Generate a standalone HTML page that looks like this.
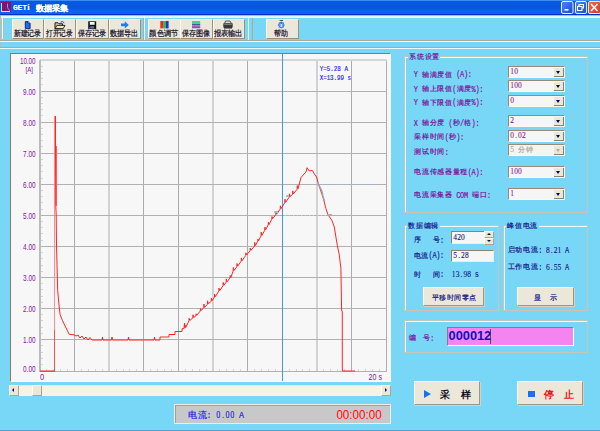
<!DOCTYPE html>
<html><head><meta charset="utf-8">
<style>
*{margin:0;padding:0;box-sizing:border-box}
html,body{width:600px;height:431px;overflow:hidden;background:#78d7f6;font-family:"Liberation Sans",sans-serif}
.a{position:absolute}
#title{left:0;top:0;width:600px;height:15px;background:linear-gradient(#3d8ef0 0,#3d8ef0 1px,#0858e0 1px,#0a56e0 9px,#0c62ee 10px,#0c62ee 14px,#0030c8 14px,#0030c8 15px)}
.ttxt{color:#fff;font-weight:bold;font-size:9px;top:2px;white-space:nowrap}
.tb{top:19px;height:20px;background:#ebe8da;border-right:1px solid #9c9078;border-bottom:1px solid #9c9078;border-top:1px solid #fafaf2;border-left:1px solid #fafaf2}
.lbl{color:#800080;font-size:8px;line-height:9px;white-space:nowrap}
.navy{color:#000080;font-size:8px;line-height:9px;white-space:nowrap}
.combo{left:508px;width:57px;height:12px;background:#f8f8f4;border-top:1px solid #9a8a74;border-left:1px solid #9a8a74;border-bottom:1px solid #fafaf4;border-right:1px solid #fafaf4}
.combo .v{position:absolute;left:2px;top:1px;font-size:8px;line-height:9px;color:#800080;font-family:"Liberation Mono",monospace}
.combo .dd{position:absolute;right:0;top:1px;width:10px;height:9px;background:#ebe8d8;border-right:1px solid #8c8070;border-bottom:1px solid #8c8070}
.combo .dd:after{content:"";position:absolute;left:2px;top:3px;border-left:2.5px solid transparent;border-right:2.5px solid transparent;border-top:3px solid #000070}
.combo.dis .dd:after{border-top-color:#b0aca0}
.grp{border:1px solid #c8c4b8;box-shadow:inset 1px 1px 0 #f0f8f8}
.gt{background:#78d7f6;font-size:8px;line-height:9px;white-space:nowrap;padding:0 1px}
.sbtn{background:#ebe8da;border-top:1px solid #fffff8;border-left:1px solid #fffff8;border-right:1px solid #a8a498;border-bottom:1px solid #a8a498}
.btn{background:#ebe8da;border-top:1px solid #fffff8;border-left:1px solid #fffff8;border-right:1px solid #9c9888;border-bottom:1px solid #9c9888;box-shadow:1px 1px 0 #d8d0c0}
</style></head><body>
<!-- title bar -->
<div class="a" id="title"></div>
<div class="a" style="left:1px;top:2px;width:10px;height:10px;background:#8a1070"></div>
<div class="a" style="left:1px;top:3px;width:1px;height:8px;background:#a0f0ff"></div>
<div class="a" style="left:1px;top:11px;width:9px;height:1px;background:#a0f0ff"></div>
<svg class="a" style="left:0;top:0" width="90" height="15"><text x="13 17.6 22.2" y="10.3" font-family="Liberation Mono" font-weight="bold" font-size="8" fill="#fff" stroke="#fff" stroke-width="0.15">GET</text><text x="27.2" y="10.3" font-family="Liberation Serif" font-weight="bold" font-size="8.5" fill="#fff" stroke="#fff" stroke-width="0.15">i</text><text x="35.8" y="11.3" font-family="Liberation Sans" font-weight="bold" font-size="8.4" fill="#fff" stroke="#fff" stroke-width="0.15" textLength="32.5" lengthAdjust="spacingAndGlyphs">数据采集</text><path d="M7.5,3.5 v4 q0.5,2 2.5,3" fill="none" stroke="#60a8f8" stroke-width="1"/></svg>
<!-- title buttons -->
<svg class="a" style="left:556px;top:0" width="44" height="15">
<defs><linearGradient id="gb" x1="0" y1="0" x2="1" y2="1"><stop offset="0" stop-color="#4a88fa"/><stop offset="1" stop-color="#1848d0"/></linearGradient>
<linearGradient id="gr" x1="0" y1="0" x2="1" y2="1"><stop offset="0" stop-color="#f06a50"/><stop offset="1" stop-color="#d03a20"/></linearGradient></defs>
<rect x="5.5" y="1.5" width="11.5" height="12" rx="1.5" fill="url(#gb)" stroke="#e8f0ff" stroke-width="1"/>
<rect x="8.5" y="9" width="4" height="1.6" fill="#fff"/>
<rect x="19.5" y="1.5" width="11" height="12" rx="1.5" fill="url(#gb)" stroke="#e8f0ff" stroke-width="1"/>
<rect x="23" y="4.5" width="4.5" height="3.5" fill="none" stroke="#fff" stroke-width="1"/>
<rect x="21.5" y="6.5" width="4.5" height="4" fill="#2a60e0" stroke="#fff" stroke-width="1.1"/>
<rect x="32.5" y="1.5" width="12" height="12" rx="1.5" fill="url(#gr)" stroke="#f8e8e0" stroke-width="1"/>
<path d="M35,4 L41.5,11 M41.5,4 L35,11" stroke="#fff" stroke-width="1.5"/>
</svg>
<!-- toolbar -->
<div class="a" style="left:0;top:15px;width:600px;height:1px;background:#c0b8a8"></div>
<div class="a" style="left:0;top:16px;width:600px;height:2px;background:#e0f8ff"></div>
<div class="a" style="left:0;top:15px;width:1px;height:33px;background:#c8b8a0"></div>
<div class="a" style="left:2px;top:18px;width:1px;height:21px;background:#f0f8f8"></div>
<div class="a" style="left:3px;top:18px;width:1px;height:21px;background:#c0b8a8"></div>
<div class="a" style="left:0;top:40px;width:600px;height:1px;background:#b0a890"></div>
<div class="a" style="left:0;top:41px;width:600px;height:1px;background:#e8f8fc"></div>
<div class="a" style="left:0;top:47px;width:600px;height:1px;background:#b0a890"></div>
<div class="a" style="left:0;top:48px;width:600px;height:1px;background:#e8f8fc"></div>

<div class="a tb" style="left:12px;width:32px"></div>
<div class="a tb" style="left:44px;width:32px"></div>
<div class="a tb" style="left:76px;width:33px"></div>
<div class="a tb" style="left:109px;width:32px"></div>
<div class="a tb" style="left:148px;width:33px"></div>
<div class="a tb" style="left:180px;width:33px"></div>
<div class="a tb" style="left:213px;width:32px"></div>
<div class="a tb" style="left:266px;width:33px"></div>
<div class="a" style="left:143px;top:18px;width:1px;height:22px;background:#c0a890"></div>
<div class="a" style="left:144px;top:18px;width:1px;height:22px;background:#f0f4f0"></div>
<div class="a" style="left:248px;top:18px;width:1px;height:22px;background:#f0f8f8"></div>
<div class="a" style="left:252px;top:18px;width:1px;height:22px;background:#b0a890"></div>
<svg class="a" style="left:0;top:0" width="300" height="42"><text x="13.6" y="36" font-family="Liberation Sans" font-size="8" fill="#141428" stroke="#141428" stroke-width="0.22" textLength="27.7" lengthAdjust="spacingAndGlyphs">新建记录</text><text x="46.1" y="36" font-family="Liberation Sans" font-size="8" fill="#141428" stroke="#141428" stroke-width="0.22" textLength="26.7" lengthAdjust="spacingAndGlyphs">打开记录</text><text x="78" y="36" font-family="Liberation Sans" font-size="8" fill="#141428" stroke="#141428" stroke-width="0.22" textLength="28.4" lengthAdjust="spacingAndGlyphs">保存记录</text><text x="110" y="36" font-family="Liberation Sans" font-size="8" fill="#141428" stroke="#141428" stroke-width="0.22" textLength="28.4" lengthAdjust="spacingAndGlyphs">数据导出</text><text x="149.3" y="36" font-family="Liberation Sans" font-size="8" fill="#141428" stroke="#141428" stroke-width="0.22" textLength="29.2" lengthAdjust="spacingAndGlyphs">颜色调节</text><text x="181.8" y="36" font-family="Liberation Sans" font-size="8" fill="#141428" stroke="#141428" stroke-width="0.22" textLength="28.2" lengthAdjust="spacingAndGlyphs">保存图像</text><text x="213.5" y="36" font-family="Liberation Sans" font-size="8" fill="#141428" stroke="#141428" stroke-width="0.22" textLength="29.2" lengthAdjust="spacingAndGlyphs">报表输出</text><text x="274.3" y="36.2" font-family="Liberation Sans" font-size="8.2" fill="#141428" stroke="#141428" stroke-width="0.22" textLength="14" lengthAdjust="spacingAndGlyphs">帮助</text><path d="M25.3,21.6 h2.8 l2,2 v5 h-4.8 z" fill="#1a6ef4" stroke="#0c1c70" stroke-width="0.9"/><path d="M28.1,21.6 v2 h2" fill="#c8d8ff" stroke="#0c1c70" stroke-width="0.7"/><path d="M55,22.8 h3 l1,1 h3.6 v5 h-7.6 z" fill="#d8d0a0" stroke="#181818" stroke-width="1"/><path d="M55.2,28.6 l1.6,-3.2 h8.2 l-1.8,3.2 z" fill="#f0e8c0" stroke="#181818" stroke-width="0.9"/><path d="M60.5,22.2 q2,-1.6 3.8,0.6" fill="none" stroke="#2040e0" stroke-width="1"/><rect x="88.2" y="21.3" width="8" height="7.8" fill="#0c1424"/><rect x="89.8" y="22" width="4.8" height="2.8" fill="#f4f4f4"/><rect x="90.2" y="26.3" width="4" height="2.2" fill="#6a7088"/><rect x="88.8" y="27" width="1.2" height="1.6" fill="#2a40ff"/><path d="M121,23.6 h3.8 v-2.4 l4,3.7 l-4,3.7 v-2.4 h-3.8 z" fill="#1a7ef0"/><rect x="160.3" y="21" width="2.8" height="7.4" fill="#ff2020"/><rect x="163.1" y="21" width="2.8" height="7.4" fill="#20c040"/><rect x="165.9" y="21" width="2.7" height="7.4" fill="#2030e0"/><rect x="192" y="21" width="8.2" height="3.2" fill="#38d898"/><rect x="192" y="24.2" width="8.2" height="1" fill="#204080"/><rect x="192" y="25.2" width="8.2" height="1" fill="#30b0a0"/><rect x="192" y="26.2" width="8.2" height="1" fill="#a040c0"/><rect x="192" y="27.2" width="8.2" height="1" fill="#3050d0"/><path d="M225.5,21 h4.5 l1.2,2.4 h-6.5 z" fill="#e8e8e8" stroke="#303030" stroke-width="0.8"/><path d="M223.3,24 q0,-1 1,-1 h7.4 q1,0 1,1 v3.6 h-9.4 z" fill="#383838"/><rect x="224.2" y="23.6" width="7.6" height="1.2" fill="#909090"/><rect x="224" y="27.2" width="8" height="1.3" fill="#202020"/><polygon points="284.90,25.00 283.98,26.11 283.85,27.55 282.41,27.68 281.30,28.60 280.19,27.68 278.75,27.55 278.62,26.11 277.70,25.00 278.62,23.89 278.75,22.45 280.19,22.32 281.30,21.40 282.41,22.32 283.85,22.45 283.98,23.89" fill="#3a78f0"/><circle cx="281.3" cy="25.0" r="2.2" fill="#6aa0ff"/><rect x="280.8" y="24" width="1" height="3" fill="#f0f8ff"/><rect x="280.8" y="22.6" width="1" height="0.9" fill="#0a30c0"/><rect x="279.6" y="20" width="3.4" height="1" fill="#505050"/></svg>
<div class="a" style="left:10px;top:53px;width:381px;height:329px;background:#f7f7f7;border-top:1px solid #8a7a6a;border-left:1px solid #8a7a6a;border-right:1px solid #fafafa;border-bottom:1px solid #fafafa"></div><svg class="a" style="left:0;top:0" width="600" height="431" id="chart" font-family="Liberation Sans"><rect x="74" y="60" width="1" height="311" fill="#acacac"/><rect x="108" y="60" width="2" height="311" fill="#d2d2d2"/><rect x="143" y="60" width="1" height="311" fill="#acacac"/><rect x="178" y="60" width="1" height="311" fill="#acacac"/><rect x="212" y="60" width="2" height="311" fill="#d2d2d2"/><rect x="247" y="60" width="1" height="311" fill="#acacac"/><rect x="282" y="60" width="1" height="311" fill="#acacac"/><rect x="316" y="60" width="2" height="311" fill="#d2d2d2"/><rect x="351" y="60" width="1" height="311" fill="#acacac"/><rect x="386" y="60" width="1" height="311" fill="#acacac"/><rect x="40" y="59" width="347" height="2" fill="#d6d6d6"/><rect x="40" y="91" width="347" height="1" fill="#b0b0b0"/><rect x="40" y="122" width="347" height="1" fill="#b0b0b0"/><rect x="40" y="153" width="347" height="1" fill="#b0b0b0"/><rect x="40" y="184" width="347" height="1" fill="#b0b0b0"/><rect x="40" y="215" width="347" height="1" fill="#b0b0b0"/><rect x="40" y="246" width="347" height="1" fill="#b0b0b0"/><rect x="40" y="277" width="347" height="1" fill="#b0b0b0"/><rect x="40" y="308" width="347" height="1" fill="#b0b0b0"/><rect x="40" y="339" width="347" height="1" fill="#b0b0b0"/><rect x="39" y="60" width="2" height="312" fill="#bcbcbc"/><rect x="40" y="371" width="347" height="1" fill="#b0b0b0"/><rect x="41" y="66" width="2" height="1" fill="#d4d4d4"/><rect x="41" y="72" width="2" height="1" fill="#d4d4d4"/><rect x="41" y="78" width="2" height="1" fill="#d4d4d4"/><rect x="41" y="84" width="2" height="1" fill="#d4d4d4"/><rect x="41" y="97" width="2" height="1" fill="#d4d4d4"/><rect x="41" y="103" width="2" height="1" fill="#d4d4d4"/><rect x="41" y="109" width="2" height="1" fill="#d4d4d4"/><rect x="41" y="115" width="2" height="1" fill="#d4d4d4"/><rect x="41" y="128" width="2" height="1" fill="#d4d4d4"/><rect x="41" y="134" width="2" height="1" fill="#d4d4d4"/><rect x="41" y="140" width="2" height="1" fill="#d4d4d4"/><rect x="41" y="146" width="2" height="1" fill="#d4d4d4"/><rect x="41" y="159" width="2" height="1" fill="#d4d4d4"/><rect x="41" y="165" width="2" height="1" fill="#d4d4d4"/><rect x="41" y="171" width="2" height="1" fill="#d4d4d4"/><rect x="41" y="178" width="2" height="1" fill="#d4d4d4"/><rect x="41" y="190" width="2" height="1" fill="#d4d4d4"/><rect x="41" y="196" width="2" height="1" fill="#d4d4d4"/><rect x="41" y="202" width="2" height="1" fill="#d4d4d4"/><rect x="41" y="209" width="2" height="1" fill="#d4d4d4"/><rect x="41" y="221" width="2" height="1" fill="#d4d4d4"/><rect x="41" y="227" width="2" height="1" fill="#d4d4d4"/><rect x="41" y="233" width="2" height="1" fill="#d4d4d4"/><rect x="41" y="240" width="2" height="1" fill="#d4d4d4"/><rect x="41" y="252" width="2" height="1" fill="#d4d4d4"/><rect x="41" y="258" width="2" height="1" fill="#d4d4d4"/><rect x="41" y="265" width="2" height="1" fill="#d4d4d4"/><rect x="41" y="271" width="2" height="1" fill="#d4d4d4"/><rect x="41" y="283" width="2" height="1" fill="#d4d4d4"/><rect x="41" y="289" width="2" height="1" fill="#d4d4d4"/><rect x="41" y="296" width="2" height="1" fill="#d4d4d4"/><rect x="41" y="302" width="2" height="1" fill="#d4d4d4"/><rect x="41" y="314" width="2" height="1" fill="#d4d4d4"/><rect x="41" y="320" width="2" height="1" fill="#d4d4d4"/><rect x="41" y="327" width="2" height="1" fill="#d4d4d4"/><rect x="41" y="333" width="2" height="1" fill="#d4d4d4"/><rect x="41" y="345" width="2" height="1" fill="#d4d4d4"/><rect x="41" y="352" width="2" height="1" fill="#d4d4d4"/><rect x="41" y="358" width="2" height="1" fill="#d4d4d4"/><rect x="41" y="364" width="2" height="1" fill="#d4d4d4"/><rect x="46" y="369" width="1" height="2" fill="#d4d4d4"/><rect x="53" y="369" width="1" height="2" fill="#d4d4d4"/><rect x="60" y="369" width="1" height="2" fill="#d4d4d4"/><rect x="67" y="369" width="1" height="2" fill="#d4d4d4"/><rect x="81" y="369" width="1" height="2" fill="#d4d4d4"/><rect x="88" y="369" width="1" height="2" fill="#d4d4d4"/><rect x="95" y="369" width="1" height="2" fill="#d4d4d4"/><rect x="102" y="369" width="1" height="2" fill="#d4d4d4"/><rect x="116" y="369" width="1" height="2" fill="#d4d4d4"/><rect x="123" y="369" width="1" height="2" fill="#d4d4d4"/><rect x="129" y="369" width="1" height="2" fill="#d4d4d4"/><rect x="136" y="369" width="1" height="2" fill="#d4d4d4"/><rect x="150" y="369" width="1" height="2" fill="#d4d4d4"/><rect x="157" y="369" width="1" height="2" fill="#d4d4d4"/><rect x="164" y="369" width="1" height="2" fill="#d4d4d4"/><rect x="171" y="369" width="1" height="2" fill="#d4d4d4"/><rect x="185" y="369" width="1" height="2" fill="#d4d4d4"/><rect x="192" y="369" width="1" height="2" fill="#d4d4d4"/><rect x="199" y="369" width="1" height="2" fill="#d4d4d4"/><rect x="206" y="369" width="1" height="2" fill="#d4d4d4"/><rect x="219" y="369" width="1" height="2" fill="#d4d4d4"/><rect x="226" y="369" width="1" height="2" fill="#d4d4d4"/><rect x="233" y="369" width="1" height="2" fill="#d4d4d4"/><rect x="240" y="369" width="1" height="2" fill="#d4d4d4"/><rect x="254" y="369" width="1" height="2" fill="#d4d4d4"/><rect x="261" y="369" width="1" height="2" fill="#d4d4d4"/><rect x="268" y="369" width="1" height="2" fill="#d4d4d4"/><rect x="275" y="369" width="1" height="2" fill="#d4d4d4"/><rect x="289" y="369" width="1" height="2" fill="#d4d4d4"/><rect x="296" y="369" width="1" height="2" fill="#d4d4d4"/><rect x="302" y="369" width="1" height="2" fill="#d4d4d4"/><rect x="309" y="369" width="1" height="2" fill="#d4d4d4"/><rect x="323" y="369" width="1" height="2" fill="#d4d4d4"/><rect x="330" y="369" width="1" height="2" fill="#d4d4d4"/><rect x="337" y="369" width="1" height="2" fill="#d4d4d4"/><rect x="344" y="369" width="1" height="2" fill="#d4d4d4"/><rect x="358" y="369" width="1" height="2" fill="#d4d4d4"/><rect x="365" y="369" width="1" height="2" fill="#d4d4d4"/><rect x="372" y="369" width="1" height="2" fill="#d4d4d4"/><rect x="379" y="369" width="1" height="2" fill="#d4d4d4"/><text x="35.6" y="63.8" text-anchor="end" textLength="15.7" lengthAdjust="spacingAndGlyphs" font-size="8.4" fill="#8414a0">10.00</text><text x="35.6" y="94.5" text-anchor="end" textLength="12.5" lengthAdjust="spacingAndGlyphs" font-size="8.4" fill="#8414a0">9.00</text><text x="35.6" y="125.5" text-anchor="end" textLength="12.5" lengthAdjust="spacingAndGlyphs" font-size="8.4" fill="#8414a0">8.00</text><text x="35.6" y="156.5" text-anchor="end" textLength="12.5" lengthAdjust="spacingAndGlyphs" font-size="8.4" fill="#8414a0">7.00</text><text x="35.6" y="187.5" text-anchor="end" textLength="12.5" lengthAdjust="spacingAndGlyphs" font-size="8.4" fill="#8414a0">6.00</text><text x="35.6" y="218.5" text-anchor="end" textLength="12.5" lengthAdjust="spacingAndGlyphs" font-size="8.4" fill="#8414a0">5.00</text><text x="35.6" y="249.5" text-anchor="end" textLength="12.5" lengthAdjust="spacingAndGlyphs" font-size="8.4" fill="#8414a0">4.00</text><text x="35.6" y="280.5" text-anchor="end" textLength="12.5" lengthAdjust="spacingAndGlyphs" font-size="8.4" fill="#8414a0">3.00</text><text x="35.6" y="311.5" text-anchor="end" textLength="12.5" lengthAdjust="spacingAndGlyphs" font-size="8.4" fill="#8414a0">2.00</text><text x="35.6" y="342.5" text-anchor="end" textLength="12.5" lengthAdjust="spacingAndGlyphs" font-size="8.4" fill="#8414a0">1.00</text><text x="35.6" y="372.0" text-anchor="end" textLength="12.5" lengthAdjust="spacingAndGlyphs" font-size="8.4" fill="#8414a0">0.00</text><text x="33" y="72.3" text-anchor="end" textLength="7.5" lengthAdjust="spacingAndGlyphs" font-size="8" fill="#8414a0">[A]</text><text x="40" y="380.2" textLength="4.2" lengthAdjust="spacingAndGlyphs" font-size="8.8" fill="#8414a0">0</text><text x="368.6" y="380.2" textLength="13.4" lengthAdjust="spacingAndGlyphs" font-size="8.8" fill="#8414a0">20 s</text><rect x="282" y="54" width="1" height="327" fill="#3898f4"/><text x="319.7" y="70.8" textLength="28.3" lengthAdjust="spacingAndGlyphs" font-family="Liberation Mono" font-size="7" fill="#2020e8" stroke="#2020e8" stroke-width="0.15">Y=5.28 A</text><text x="319.7" y="80.4" textLength="31.3" lengthAdjust="spacingAndGlyphs" font-family="Liberation Mono" font-size="7" fill="#2020e8" stroke="#2020e8" stroke-width="0.15">X=13.99 s</text><rect x="40" y="370.5" width="15" height="1.2" fill="#ff2020"/><rect x="54" y="116" width="1" height="255" fill="#ff8c8c"/><rect x="54" y="330" width="1" height="41" fill="#ff5050"/><rect x="56" y="146" width="1" height="60" fill="#ff6060"/><polyline points="55.5,116.0 55.5,146.0 55.7,204.0 56.2,215.0 56.5,245.0 57.7,290.5 59.0,305.0 60.1,314.7 62.5,320.7 65.5,326.8 69.2,334.3 74.0,334.8 76.0,336.0 78.0,335.0 80.0,338.0 82.0,336.0 84.0,339.0 86.0,337.0 88.0,340.0 90.0,337.5 92.0,340.0 94.0,340.0 102.0,340.0 102.5,337.0 103.0,340.0 111.5,340.0 112.0,337.0 112.5,340.0 128.0,340.0 128.5,337.0 129.0,340.0 154.0,340.0 154.5,337.0 155.0,340.0 160.0,340.0 160.0,337.0 169.0,337.0 169.0,334.5 175.0,334.5 175.0,331.5 182.0,331.5 182.0,328.7 184.0,328.7 184.5,323.0 185.0,327.8 185.2,325.4 185.9,327.3 188.9,320.9 189.1,318.3 189.8,320.4 192.8,318.0 193.0,314.8 193.7,317.5 195.9,315.8 196.1,313.8 196.8,315.3 200.3,311.0 200.5,308.5 201.2,310.5 203.7,307.8 203.9,304.0 204.6,307.3 207.4,304.3 207.6,300.8 208.3,303.8 211.2,301.3 211.4,298.2 212.1,300.8 214.4,297.2 214.6,294.1 215.3,296.7 218.8,291.1 219.0,288.1 219.7,290.6 223.0,285.7 223.2,282.4 223.9,285.2 226.1,282.3 226.3,278.9 227.0,281.8 230.0,278.0 230.2,275.5 230.9,277.5 233.1,271.1 233.3,267.5 234.0,270.6 236.8,266.7 237.0,263.5 237.7,266.2 241.2,261.2 241.4,257.9 242.1,260.7 245.7,255.5 245.9,252.8 246.6,255.0 250.0,250.8 250.2,248.0 250.9,250.3 254.5,246.0 254.7,242.4 255.4,245.5 257.7,241.3 257.9,239.1 258.6,240.8 261.0,235.9 261.2,232.1 261.9,235.4 264.7,230.4 264.9,227.2 265.6,229.9 268.2,225.0 268.4,222.1 269.1,224.5 271.8,219.2 272.0,216.5 272.7,218.7 275.7,214.7 275.9,211.6 276.6,214.2 280.2,209.1 280.4,205.8 281.1,208.6 284.7,202.8 284.9,199.2 285.6,202.3 289.3,197.0 289.5,193.8 290.2,196.5 292.5,194.4 292.7,190.9 293.4,193.9 297.1,189.3 297.3,185.6 298.0,188.8 301.0,177.6 304.0,174.0 306.0,172.0 307.1,167.7 309.2,170.9 312.4,170.5 314.4,174.0 316.5,177.0 318.6,184.4 321.8,193.8 323.8,200.0 325.9,208.5 328.0,214.7 332.2,221.0 334.3,227.0 336.4,240.0 337.4,245.7 339.2,254.4 340.9,268.3 341.6,310.0 342.3,312.0 342.3,371.0 355.0,371.0" fill="none" stroke="#ff2424" stroke-width="1" stroke-linejoin="miter"/><line x1="320" y1="184.5" x2="376" y2="184.5" stroke="#a8b4c4" stroke-width="1" stroke-dasharray="8 2 2 3"/><polyline points="317.5,182 320,187 322,191 323,196 324.5,201" fill="none" stroke="#98a8c0" stroke-width="1.3"/><line x1="285" y1="215.5" x2="332" y2="215.5" stroke="#c8ccd4" stroke-width="1" stroke-dasharray="1 3"/><rect x="327" y="214" width="5" height="2" fill="#a0acc0"/><rect x="274" y="211" width="4" height="2" fill="#a8b4c8"/><rect x="286" y="195" width="3" height="2" fill="#b0bcd0"/></svg><!-- scrollbar -->
<div class="a" style="left:9px;top:385px;width:382px;height:11px;background:#f4f3e6;border-top:1px solid #e8e4d8"></div>
<div class="a sbtn" style="left:9px;top:385px;width:10px;height:11px"></div>
<div class="a" style="left:12px;top:388px;border-top:2px solid transparent;border-bottom:2px solid transparent;border-right:2px solid #000060"></div>
<div class="a sbtn" style="left:32px;top:385px;width:10px;height:11px"></div>
<div class="a sbtn" style="left:381px;top:385px;width:10px;height:11px"></div>
<div class="a" style="left:385px;top:388px;border-top:2px solid transparent;border-bottom:2px solid transparent;border-left:2px solid #000060"></div>
<div class="a grp" style="left:404px;top:56px;width:184px;height:157px"></div>
<div class="a grp" style="left:404px;top:225px;width:95px;height:86px"></div>
<div class="a grp" style="left:503px;top:225px;width:85px;height:86px"></div>
<div class="a grp" style="left:404px;top:320px;width:184px;height:33px"></div>
<div class="a" style="left:408px;top:53px;width:32px;height:8px;background:#78d7f6"></div>
<div class="a" style="left:407px;top:222px;width:33px;height:8px;background:#78d7f6"></div>
<div class="a" style="left:506px;top:222px;width:33px;height:8px;background:#78d7f6"></div>
<div class="a combo" style="top:66px;background:#f6f6f6"><div class="dd"></div></div>
<div class="a combo" style="top:80px;background:#f6f6f6"><div class="dd"></div></div>
<div class="a combo" style="top:95px;background:#f6f6f6"><div class="dd"></div></div>
<div class="a combo" style="top:115px;background:#f6f6f6"><div class="dd"></div></div>
<div class="a combo" style="top:130px;background:#f6f6f6"><div class="dd"></div></div>
<div class="a combo dis" style="top:144px;background:#f4f4f0"><div class="dd"></div></div>
<div class="a combo" style="top:166px;background:#f6f6f6"><div class="dd"></div></div>
<div class="a combo" style="top:188px;background:#f6f6f6"><div class="dd"></div></div>
<div class="a" style="left:451px;top:231px;width:33px;height:13px;background:#f6f6f4;border-top:1px solid #8c8070;border-left:1px solid #8c8070;border-bottom:1px solid #f0ece0"></div>
<div class="a sbtn" style="left:484px;top:231px;width:10px;height:7px"></div>
<div class="a sbtn" style="left:484px;top:238px;width:10px;height:7px"></div>
<div class="a" style="left:487px;top:233px;border-left:2px solid transparent;border-right:2px solid transparent;border-bottom:2px solid #101040"></div>
<div class="a" style="left:487px;top:240px;border-left:2px solid transparent;border-right:2px solid transparent;border-top:2px solid #101040"></div>
<div class="a" style="left:451px;top:250px;width:43px;height:12px;background:#f6f6f4;border-top:1px solid #8c8070;border-left:1px solid #8c8070;border-bottom:1px solid #f0ece0;border-right:1px solid #f0ece0"></div>
<div class="a btn" style="left:423px;top:287px;width:61px;height:19px"></div>
<div class="a btn" style="left:517px;top:287px;width:57px;height:19px"></div>
<div class="a" style="left:447px;top:327px;width:127px;height:19px;background:#f484f0;border-top:1px solid #808080;border-left:1px solid #808080;border-bottom:1px solid #fff;border-right:1px solid #fff"></div>
<div class="a" style="left:490px;top:329px;width:1px;height:15px;background:#505050"></div>
<div class="a btn" style="left:414px;top:381px;width:66px;height:24px"></div>
<div class="a" style="left:424px;top:390px;border-top:4px solid transparent;border-bottom:4px solid transparent;border-left:7px solid #1a70f0"></div>
<div class="a btn" style="left:517px;top:381px;width:66px;height:24px"></div>
<div class="a" style="left:528px;top:391px;width:7px;height:6px;background:#1a70f0"></div>
<div class="a" style="left:174px;top:404px;width:217px;height:20px;background:#c8c8c8;border:1px solid #f0ece0;box-shadow:inset 1px 1px 0 #a0a0a0"></div>
<div class="a" style="left:0;top:430px;width:600px;height:1px;background:#5a9ad8"></div><svg class="a" style="left:0;top:0" width="600" height="431" font-family="Liberation Sans"><text x="409.27 416.97 424.67 432.37" y="59.40" font-size="7.1610000000000005" fill="#7e0a98" stroke="#7e0a98" stroke-width="0.18">系统设置</text><text x="408.27 415.97 423.67 431.37" y="228.40" font-size="7.1610000000000005" fill="#14148a" stroke="#14148a" stroke-width="0.18">数据编辑</text><text x="507.27 514.97 522.67 530.37" y="228.40" font-size="7.1610000000000005" fill="#14148a" stroke="#14148a" stroke-width="0.18">峰值电流</text><text transform="translate(415.93,77.3) scale(0.787,1)" text-anchor="middle" font-family="Liberation Mono" font-size="8.8" fill="#7e0a98" stroke="#7e0a98" stroke-width="0.18">Y</text><text x="421.97 429.67 437.37 445.07" y="76.70" font-size="7.1610000000000005" fill="#7e0a98" stroke="#7e0a98" stroke-width="0.18">轴满度值</text><text transform="translate(458.28,77.3) scale(0.787,1)" text-anchor="middle" font-family="Liberation Mono" font-size="8.8" fill="#7e0a98" stroke="#7e0a98" stroke-width="0.18">(</text><text transform="translate(462.12,77.3) scale(0.787,1)" text-anchor="middle" font-family="Liberation Mono" font-size="8.8" fill="#7e0a98" stroke="#7e0a98" stroke-width="0.18">A</text><text transform="translate(465.98,77.3) scale(0.787,1)" text-anchor="middle" font-family="Liberation Mono" font-size="8.8" fill="#7e0a98" stroke="#7e0a98" stroke-width="0.18">)</text><text transform="translate(469.82,77.3) scale(0.787,1)" text-anchor="middle" font-family="Liberation Mono" font-size="8.8" fill="#7e0a98" stroke="#7e0a98" stroke-width="0.18">:</text><text transform="translate(415.93,91.6) scale(0.787,1)" text-anchor="middle" font-family="Liberation Mono" font-size="8.8" fill="#7e0a98" stroke="#7e0a98" stroke-width="0.18">Y</text><text x="421.97 429.67 437.37 445.07" y="91.00" font-size="7.1610000000000005" fill="#7e0a98" stroke="#7e0a98" stroke-width="0.18">轴上限值</text><text transform="translate(454.43,91.6) scale(0.787,1)" text-anchor="middle" font-family="Liberation Mono" font-size="8.8" fill="#7e0a98" stroke="#7e0a98" stroke-width="0.18">(</text><text x="456.62 464.32" y="91.00" font-size="7.1610000000000005" fill="#7e0a98" stroke="#7e0a98" stroke-width="0.18">满度</text><text transform="translate(473.68,91.6) scale(0.787,1)" text-anchor="middle" font-family="Liberation Mono" font-size="8.8" fill="#7e0a98" stroke="#7e0a98" stroke-width="0.18">%</text><text transform="translate(477.53,91.6) scale(0.787,1)" text-anchor="middle" font-family="Liberation Mono" font-size="8.8" fill="#7e0a98" stroke="#7e0a98" stroke-width="0.18">)</text><text transform="translate(481.38,91.6) scale(0.787,1)" text-anchor="middle" font-family="Liberation Mono" font-size="8.8" fill="#7e0a98" stroke="#7e0a98" stroke-width="0.18">:</text><text transform="translate(415.93,105.3) scale(0.787,1)" text-anchor="middle" font-family="Liberation Mono" font-size="8.8" fill="#7e0a98" stroke="#7e0a98" stroke-width="0.18">Y</text><text x="421.97 429.67 437.37 445.07" y="104.70" font-size="7.1610000000000005" fill="#7e0a98" stroke="#7e0a98" stroke-width="0.18">轴下限值</text><text transform="translate(454.43,105.3) scale(0.787,1)" text-anchor="middle" font-family="Liberation Mono" font-size="8.8" fill="#7e0a98" stroke="#7e0a98" stroke-width="0.18">(</text><text x="456.62 464.32" y="104.70" font-size="7.1610000000000005" fill="#7e0a98" stroke="#7e0a98" stroke-width="0.18">满度</text><text transform="translate(473.68,105.3) scale(0.787,1)" text-anchor="middle" font-family="Liberation Mono" font-size="8.8" fill="#7e0a98" stroke="#7e0a98" stroke-width="0.18">%</text><text transform="translate(477.53,105.3) scale(0.787,1)" text-anchor="middle" font-family="Liberation Mono" font-size="8.8" fill="#7e0a98" stroke="#7e0a98" stroke-width="0.18">)</text><text transform="translate(481.38,105.3) scale(0.787,1)" text-anchor="middle" font-family="Liberation Mono" font-size="8.8" fill="#7e0a98" stroke="#7e0a98" stroke-width="0.18">:</text><text transform="translate(415.93,125.5) scale(0.787,1)" text-anchor="middle" font-family="Liberation Mono" font-size="8.8" fill="#7e0a98" stroke="#7e0a98" stroke-width="0.18">X</text><text x="421.97 429.67 437.37" y="124.90" font-size="7.1610000000000005" fill="#7e0a98" stroke="#7e0a98" stroke-width="0.18">轴分度</text><text transform="translate(450.57,125.5) scale(0.787,1)" text-anchor="middle" font-family="Liberation Mono" font-size="8.8" fill="#7e0a98" stroke="#7e0a98" stroke-width="0.18">(</text><text x="452.77" y="124.90" font-size="7.1610000000000005" fill="#7e0a98" stroke="#7e0a98" stroke-width="0.18">秒</text><text transform="translate(462.12,125.5) scale(0.787,1)" text-anchor="middle" font-family="Liberation Mono" font-size="8.8" fill="#7e0a98" stroke="#7e0a98" stroke-width="0.18">/</text><text x="464.32" y="124.90" font-size="7.1610000000000005" fill="#7e0a98" stroke="#7e0a98" stroke-width="0.18">格</text><text transform="translate(473.68,125.5) scale(0.787,1)" text-anchor="middle" font-family="Liberation Mono" font-size="8.8" fill="#7e0a98" stroke="#7e0a98" stroke-width="0.18">)</text><text transform="translate(477.53,125.5) scale(0.787,1)" text-anchor="middle" font-family="Liberation Mono" font-size="8.8" fill="#7e0a98" stroke="#7e0a98" stroke-width="0.18">:</text><text x="414.27 421.97 429.67 437.37" y="139.10" font-size="7.1610000000000005" fill="#7e0a98" stroke="#7e0a98" stroke-width="0.18">采样时间</text><text transform="translate(446.73,139.7) scale(0.787,1)" text-anchor="middle" font-family="Liberation Mono" font-size="8.8" fill="#7e0a98" stroke="#7e0a98" stroke-width="0.18">(</text><text x="448.92" y="139.10" font-size="7.1610000000000005" fill="#7e0a98" stroke="#7e0a98" stroke-width="0.18">秒</text><text transform="translate(458.28,139.7) scale(0.787,1)" text-anchor="middle" font-family="Liberation Mono" font-size="8.8" fill="#7e0a98" stroke="#7e0a98" stroke-width="0.18">)</text><text transform="translate(462.12,139.7) scale(0.787,1)" text-anchor="middle" font-family="Liberation Mono" font-size="8.8" fill="#7e0a98" stroke="#7e0a98" stroke-width="0.18">:</text><text x="414.27 421.97 429.67 437.37" y="154.10" font-size="7.1610000000000005" fill="#7e0a98" stroke="#7e0a98" stroke-width="0.18">测试时间</text><text transform="translate(446.73,154.7) scale(0.787,1)" text-anchor="middle" font-family="Liberation Mono" font-size="8.8" fill="#7e0a98" stroke="#7e0a98" stroke-width="0.18">:</text><text x="414.27 421.97 429.67 437.37 445.07 452.77 460.47" y="174.40" font-size="7.1610000000000005" fill="#7e0a98" stroke="#7e0a98" stroke-width="0.18">电流传感器量程</text><text transform="translate(469.82,175) scale(0.787,1)" text-anchor="middle" font-family="Liberation Mono" font-size="8.8" fill="#7e0a98" stroke="#7e0a98" stroke-width="0.18">(</text><text transform="translate(473.68,175) scale(0.787,1)" text-anchor="middle" font-family="Liberation Mono" font-size="8.8" fill="#7e0a98" stroke="#7e0a98" stroke-width="0.18">A</text><text transform="translate(477.53,175) scale(0.787,1)" text-anchor="middle" font-family="Liberation Mono" font-size="8.8" fill="#7e0a98" stroke="#7e0a98" stroke-width="0.18">)</text><text transform="translate(481.38,175) scale(0.787,1)" text-anchor="middle" font-family="Liberation Mono" font-size="8.8" fill="#7e0a98" stroke="#7e0a98" stroke-width="0.18">:</text><text x="414.27 421.97 429.67 437.37 445.07" y="196.90" font-size="7.1610000000000005" fill="#7e0a98" stroke="#7e0a98" stroke-width="0.18">电流采集器</text><text transform="translate(458.28,197.5) scale(0.787,1)" text-anchor="middle" font-family="Liberation Mono" font-size="8.8" fill="#7e0a98" stroke="#7e0a98" stroke-width="0.18">C</text><text transform="translate(462.12,197.5) scale(0.787,1)" text-anchor="middle" font-family="Liberation Mono" font-size="8.8" fill="#7e0a98" stroke="#7e0a98" stroke-width="0.18">O</text><text transform="translate(465.98,197.5) scale(0.787,1)" text-anchor="middle" font-family="Liberation Mono" font-size="8.8" fill="#7e0a98" stroke="#7e0a98" stroke-width="0.18">M</text><text x="472.02 479.72" y="196.90" font-size="7.1610000000000005" fill="#7e0a98" stroke="#7e0a98" stroke-width="0.18">端口</text><text transform="translate(489.07,197.5) scale(0.787,1)" text-anchor="middle" font-family="Liberation Mono" font-size="8.8" fill="#7e0a98" stroke="#7e0a98" stroke-width="0.18">:</text><text transform="translate(512.23,74.2) scale(0.850,1)" text-anchor="middle" font-family="Liberation Serif" font-size="8.8" fill="#8a1a9a" stroke="#8a1a9a" stroke-width="0.12">1</text><text transform="translate(516.07,74.2) scale(0.850,1)" text-anchor="middle" font-family="Liberation Serif" font-size="8.8" fill="#8a1a9a" stroke="#8a1a9a" stroke-width="0.12">0</text><text transform="translate(512.23,88.2) scale(0.850,1)" text-anchor="middle" font-family="Liberation Serif" font-size="8.8" fill="#8a1a9a" stroke="#8a1a9a" stroke-width="0.12">1</text><text transform="translate(516.07,88.2) scale(0.850,1)" text-anchor="middle" font-family="Liberation Serif" font-size="8.8" fill="#8a1a9a" stroke="#8a1a9a" stroke-width="0.12">0</text><text transform="translate(519.92,88.2) scale(0.850,1)" text-anchor="middle" font-family="Liberation Serif" font-size="8.8" fill="#8a1a9a" stroke="#8a1a9a" stroke-width="0.12">0</text><text transform="translate(512.23,103.2) scale(0.850,1)" text-anchor="middle" font-family="Liberation Serif" font-size="8.8" fill="#8a1a9a" stroke="#8a1a9a" stroke-width="0.12">0</text><text transform="translate(512.23,123.2) scale(0.850,1)" text-anchor="middle" font-family="Liberation Serif" font-size="8.8" fill="#8a1a9a" stroke="#8a1a9a" stroke-width="0.12">2</text><text transform="translate(512.23,138.2) scale(0.850,1)" text-anchor="middle" font-family="Liberation Serif" font-size="8.8" fill="#8a1a9a" stroke="#8a1a9a" stroke-width="0.12">0</text><text transform="translate(516.07,138.2) scale(0.850,1)" text-anchor="middle" font-family="Liberation Serif" font-size="8.8" fill="#8a1a9a" stroke="#8a1a9a" stroke-width="0.12">.</text><text transform="translate(519.92,138.2) scale(0.850,1)" text-anchor="middle" font-family="Liberation Serif" font-size="8.8" fill="#8a1a9a" stroke="#8a1a9a" stroke-width="0.12">0</text><text transform="translate(523.77,138.2) scale(0.850,1)" text-anchor="middle" font-family="Liberation Serif" font-size="8.8" fill="#8a1a9a" stroke="#8a1a9a" stroke-width="0.12">2</text><text transform="translate(512.23,152.2) scale(0.850,1)" text-anchor="middle" font-family="Liberation Serif" font-size="8.8" fill="#a8a8a0" stroke="#a8a8a0" stroke-width="0.12">5</text><text x="518.27 525.97" y="151.60" font-size="7.1610000000000005" fill="#a8a8a0" stroke="#a8a8a0" stroke-width="0.18">分钟</text><text transform="translate(512.23,174.2) scale(0.850,1)" text-anchor="middle" font-family="Liberation Serif" font-size="8.8" fill="#8a1a9a" stroke="#8a1a9a" stroke-width="0.12">1</text><text transform="translate(516.07,174.2) scale(0.850,1)" text-anchor="middle" font-family="Liberation Serif" font-size="8.8" fill="#8a1a9a" stroke="#8a1a9a" stroke-width="0.12">0</text><text transform="translate(519.92,174.2) scale(0.850,1)" text-anchor="middle" font-family="Liberation Serif" font-size="8.8" fill="#8a1a9a" stroke="#8a1a9a" stroke-width="0.12">0</text><text transform="translate(512.23,196.2) scale(0.850,1)" text-anchor="middle" font-family="Liberation Serif" font-size="8.8" fill="#8a1a9a" stroke="#8a1a9a" stroke-width="0.12">1</text><text x="413.57" y="242.00" font-size="7.1610000000000005" fill="#14148a" stroke="#14148a" stroke-width="0.18">序</text><text x="432.82" y="242.00" font-size="7.1610000000000005" fill="#14148a" stroke="#14148a" stroke-width="0.18">号</text><text transform="translate(442.18,242.6) scale(0.787,1)" text-anchor="middle" font-family="Liberation Mono" font-size="8.8" fill="#14148a" stroke="#14148a" stroke-width="0.18">:</text><text x="413.57 421.27" y="257.60" font-size="7.1610000000000005" fill="#14148a" stroke="#14148a" stroke-width="0.18">电流</text><text transform="translate(430.62,258.2) scale(0.787,1)" text-anchor="middle" font-family="Liberation Mono" font-size="8.8" fill="#14148a" stroke="#14148a" stroke-width="0.18">(</text><text transform="translate(434.48,258.2) scale(0.787,1)" text-anchor="middle" font-family="Liberation Mono" font-size="8.8" fill="#14148a" stroke="#14148a" stroke-width="0.18">A</text><text transform="translate(438.33,258.2) scale(0.787,1)" text-anchor="middle" font-family="Liberation Mono" font-size="8.8" fill="#14148a" stroke="#14148a" stroke-width="0.18">)</text><text transform="translate(442.18,258.2) scale(0.787,1)" text-anchor="middle" font-family="Liberation Mono" font-size="8.8" fill="#14148a" stroke="#14148a" stroke-width="0.18">:</text><text x="413.57" y="276.60" font-size="7.1610000000000005" fill="#14148a" stroke="#14148a" stroke-width="0.18">时</text><text x="432.82" y="276.60" font-size="7.1610000000000005" fill="#14148a" stroke="#14148a" stroke-width="0.18">间</text><text transform="translate(442.18,277.2) scale(0.787,1)" text-anchor="middle" font-family="Liberation Mono" font-size="8.8" fill="#14148a" stroke="#14148a" stroke-width="0.18">:</text><text transform="translate(453.73,277.2) scale(0.850,1)" text-anchor="middle" font-family="Liberation Serif" font-size="8.8" fill="#14148a" stroke="#14148a" stroke-width="0.12">1</text><text transform="translate(457.58,277.2) scale(0.850,1)" text-anchor="middle" font-family="Liberation Serif" font-size="8.8" fill="#14148a" stroke="#14148a" stroke-width="0.12">3</text><text transform="translate(461.43,277.2) scale(0.850,1)" text-anchor="middle" font-family="Liberation Serif" font-size="8.8" fill="#14148a" stroke="#14148a" stroke-width="0.12">.</text><text transform="translate(465.28,277.2) scale(0.850,1)" text-anchor="middle" font-family="Liberation Serif" font-size="8.8" fill="#14148a" stroke="#14148a" stroke-width="0.12">9</text><text transform="translate(469.12,277.2) scale(0.850,1)" text-anchor="middle" font-family="Liberation Serif" font-size="8.8" fill="#14148a" stroke="#14148a" stroke-width="0.12">8</text><text transform="translate(476.83,277.2) scale(0.787,1)" text-anchor="middle" font-family="Liberation Mono" font-size="8.8" fill="#14148a" stroke="#14148a" stroke-width="0.18">s</text><text transform="translate(455.23,240.2) scale(0.850,1)" text-anchor="middle" font-family="Liberation Serif" font-size="8.8" fill="#14148a" stroke="#14148a" stroke-width="0.12">4</text><text transform="translate(459.08,240.2) scale(0.850,1)" text-anchor="middle" font-family="Liberation Serif" font-size="8.8" fill="#14148a" stroke="#14148a" stroke-width="0.12">2</text><text transform="translate(462.93,240.2) scale(0.850,1)" text-anchor="middle" font-family="Liberation Serif" font-size="8.8" fill="#14148a" stroke="#14148a" stroke-width="0.12">0</text><text transform="translate(455.23,258.4) scale(0.850,1)" text-anchor="middle" font-family="Liberation Serif" font-size="8.8" fill="#14148a" stroke="#14148a" stroke-width="0.12">5</text><text transform="translate(459.08,258.4) scale(0.850,1)" text-anchor="middle" font-family="Liberation Serif" font-size="8.8" fill="#14148a" stroke="#14148a" stroke-width="0.12">.</text><text transform="translate(462.93,258.4) scale(0.850,1)" text-anchor="middle" font-family="Liberation Serif" font-size="8.8" fill="#14148a" stroke="#14148a" stroke-width="0.12">2</text><text transform="translate(466.78,258.4) scale(0.850,1)" text-anchor="middle" font-family="Liberation Serif" font-size="8.8" fill="#14148a" stroke="#14148a" stroke-width="0.12">8</text><text x="431.56 439.06 446.56 454.06 461.56 469.06" y="299.70" font-size="6.9750000000000005" fill="#14148a" stroke="#14148a" stroke-width="0.18">平移时间零点</text><text x="507.77 515.47 523.17 530.87" y="251.90" font-size="7.1610000000000005" fill="#14148a" stroke="#14148a" stroke-width="0.18">启动电流</text><text transform="translate(540.22,252.5) scale(0.787,1)" text-anchor="middle" font-family="Liberation Mono" font-size="8.8" fill="#14148a" stroke="#14148a" stroke-width="0.18">:</text><text transform="translate(547.92,252.5) scale(0.850,1)" text-anchor="middle" font-family="Liberation Serif" font-size="8.8" fill="#14148a" stroke="#14148a" stroke-width="0.12">8</text><text transform="translate(551.77,252.5) scale(0.850,1)" text-anchor="middle" font-family="Liberation Serif" font-size="8.8" fill="#14148a" stroke="#14148a" stroke-width="0.12">.</text><text transform="translate(555.62,252.5) scale(0.850,1)" text-anchor="middle" font-family="Liberation Serif" font-size="8.8" fill="#14148a" stroke="#14148a" stroke-width="0.12">2</text><text transform="translate(559.47,252.5) scale(0.850,1)" text-anchor="middle" font-family="Liberation Serif" font-size="8.8" fill="#14148a" stroke="#14148a" stroke-width="0.12">1</text><text transform="translate(567.17,252.5) scale(0.787,1)" text-anchor="middle" font-family="Liberation Mono" font-size="8.8" fill="#14148a" stroke="#14148a" stroke-width="0.18">A</text><text x="507.77 515.47 523.17 530.87" y="269.40" font-size="7.1610000000000005" fill="#14148a" stroke="#14148a" stroke-width="0.18">工作电流</text><text transform="translate(540.22,270.0) scale(0.787,1)" text-anchor="middle" font-family="Liberation Mono" font-size="8.8" fill="#14148a" stroke="#14148a" stroke-width="0.18">:</text><text transform="translate(547.92,270.0) scale(0.850,1)" text-anchor="middle" font-family="Liberation Serif" font-size="8.8" fill="#14148a" stroke="#14148a" stroke-width="0.12">6</text><text transform="translate(551.77,270.0) scale(0.850,1)" text-anchor="middle" font-family="Liberation Serif" font-size="8.8" fill="#14148a" stroke="#14148a" stroke-width="0.12">.</text><text transform="translate(555.62,270.0) scale(0.850,1)" text-anchor="middle" font-family="Liberation Serif" font-size="8.8" fill="#14148a" stroke="#14148a" stroke-width="0.12">5</text><text transform="translate(559.47,270.0) scale(0.850,1)" text-anchor="middle" font-family="Liberation Serif" font-size="8.8" fill="#14148a" stroke="#14148a" stroke-width="0.12">5</text><text transform="translate(567.17,270.0) scale(0.787,1)" text-anchor="middle" font-family="Liberation Mono" font-size="8.8" fill="#14148a" stroke="#14148a" stroke-width="0.18">A</text><text x="534.47" y="300.10" font-size="7.1610000000000005" fill="#14148a" stroke="#14148a" stroke-width="0.18">显</text><text x="549.87" y="300.10" font-size="7.1610000000000005" fill="#14148a" stroke="#14148a" stroke-width="0.18">示</text><text x="408.95" y="340.20" font-size="6.696000000000001" fill="#7e0a98" stroke="#7e0a98" stroke-width="0.18">编</text><text x="423.35" y="340.20" font-size="6.696000000000001" fill="#7e0a98" stroke="#7e0a98" stroke-width="0.18">号</text><text transform="translate(432.10,340.8) scale(0.736,1)" text-anchor="middle" font-family="Liberation Mono" font-size="8.8" fill="#7e0a98" stroke="#7e0a98" stroke-width="0.18">:</text><text x="448.6" y="339.9" font-family="Liberation Sans" font-weight="bold" font-size="12.8" textLength="42.6" lengthAdjust="spacingAndGlyphs" fill="#1010c0">000012</text><text x="439.8" y="397.8" font-size="10" font-weight="bold" fill="#101028">采</text><text x="460.6" y="397.8" font-size="10" font-weight="bold" fill="#101028">样</text><text x="543.5" y="397.8" font-size="10" font-weight="bold" fill="#e81818">停</text><text x="563.6" y="397.8" font-size="10" font-weight="bold" fill="#e81818">止</text><text x="188.33 197.63" y="417.80" font-size="8.649000000000001" fill="#1c1cf0" stroke="#1c1cf0" stroke-width="0.18">电流</text><text transform="translate(208.92,418.4) scale(0.881,1)" text-anchor="middle" font-family="Liberation Mono" font-size="9.5" fill="#1c1cf0" stroke="#1c1cf0" stroke-width="0.18">:</text><text transform="translate(218.22,418.4) scale(0.850,1)" text-anchor="middle" font-family="Liberation Serif" font-size="9.5" fill="#1c1cf0" stroke="#1c1cf0" stroke-width="0.12">0</text><text transform="translate(222.88,418.4) scale(0.850,1)" text-anchor="middle" font-family="Liberation Serif" font-size="9.5" fill="#1c1cf0" stroke="#1c1cf0" stroke-width="0.12">.</text><text transform="translate(227.52,418.4) scale(0.850,1)" text-anchor="middle" font-family="Liberation Serif" font-size="9.5" fill="#1c1cf0" stroke="#1c1cf0" stroke-width="0.12">0</text><text transform="translate(232.17,418.4) scale(0.850,1)" text-anchor="middle" font-family="Liberation Serif" font-size="9.5" fill="#1c1cf0" stroke="#1c1cf0" stroke-width="0.12">0</text><text transform="translate(241.47,418.4) scale(0.881,1)" text-anchor="middle" font-family="Liberation Mono" font-size="9.5" fill="#1c1cf0" stroke="#1c1cf0" stroke-width="0.18">A</text><text x="336.4" y="419" font-family="Liberation Sans" font-size="12" textLength="45.2" lengthAdjust="spacingAndGlyphs" fill="#ff0a0a">00:00:00</text></svg>
</body></html>
